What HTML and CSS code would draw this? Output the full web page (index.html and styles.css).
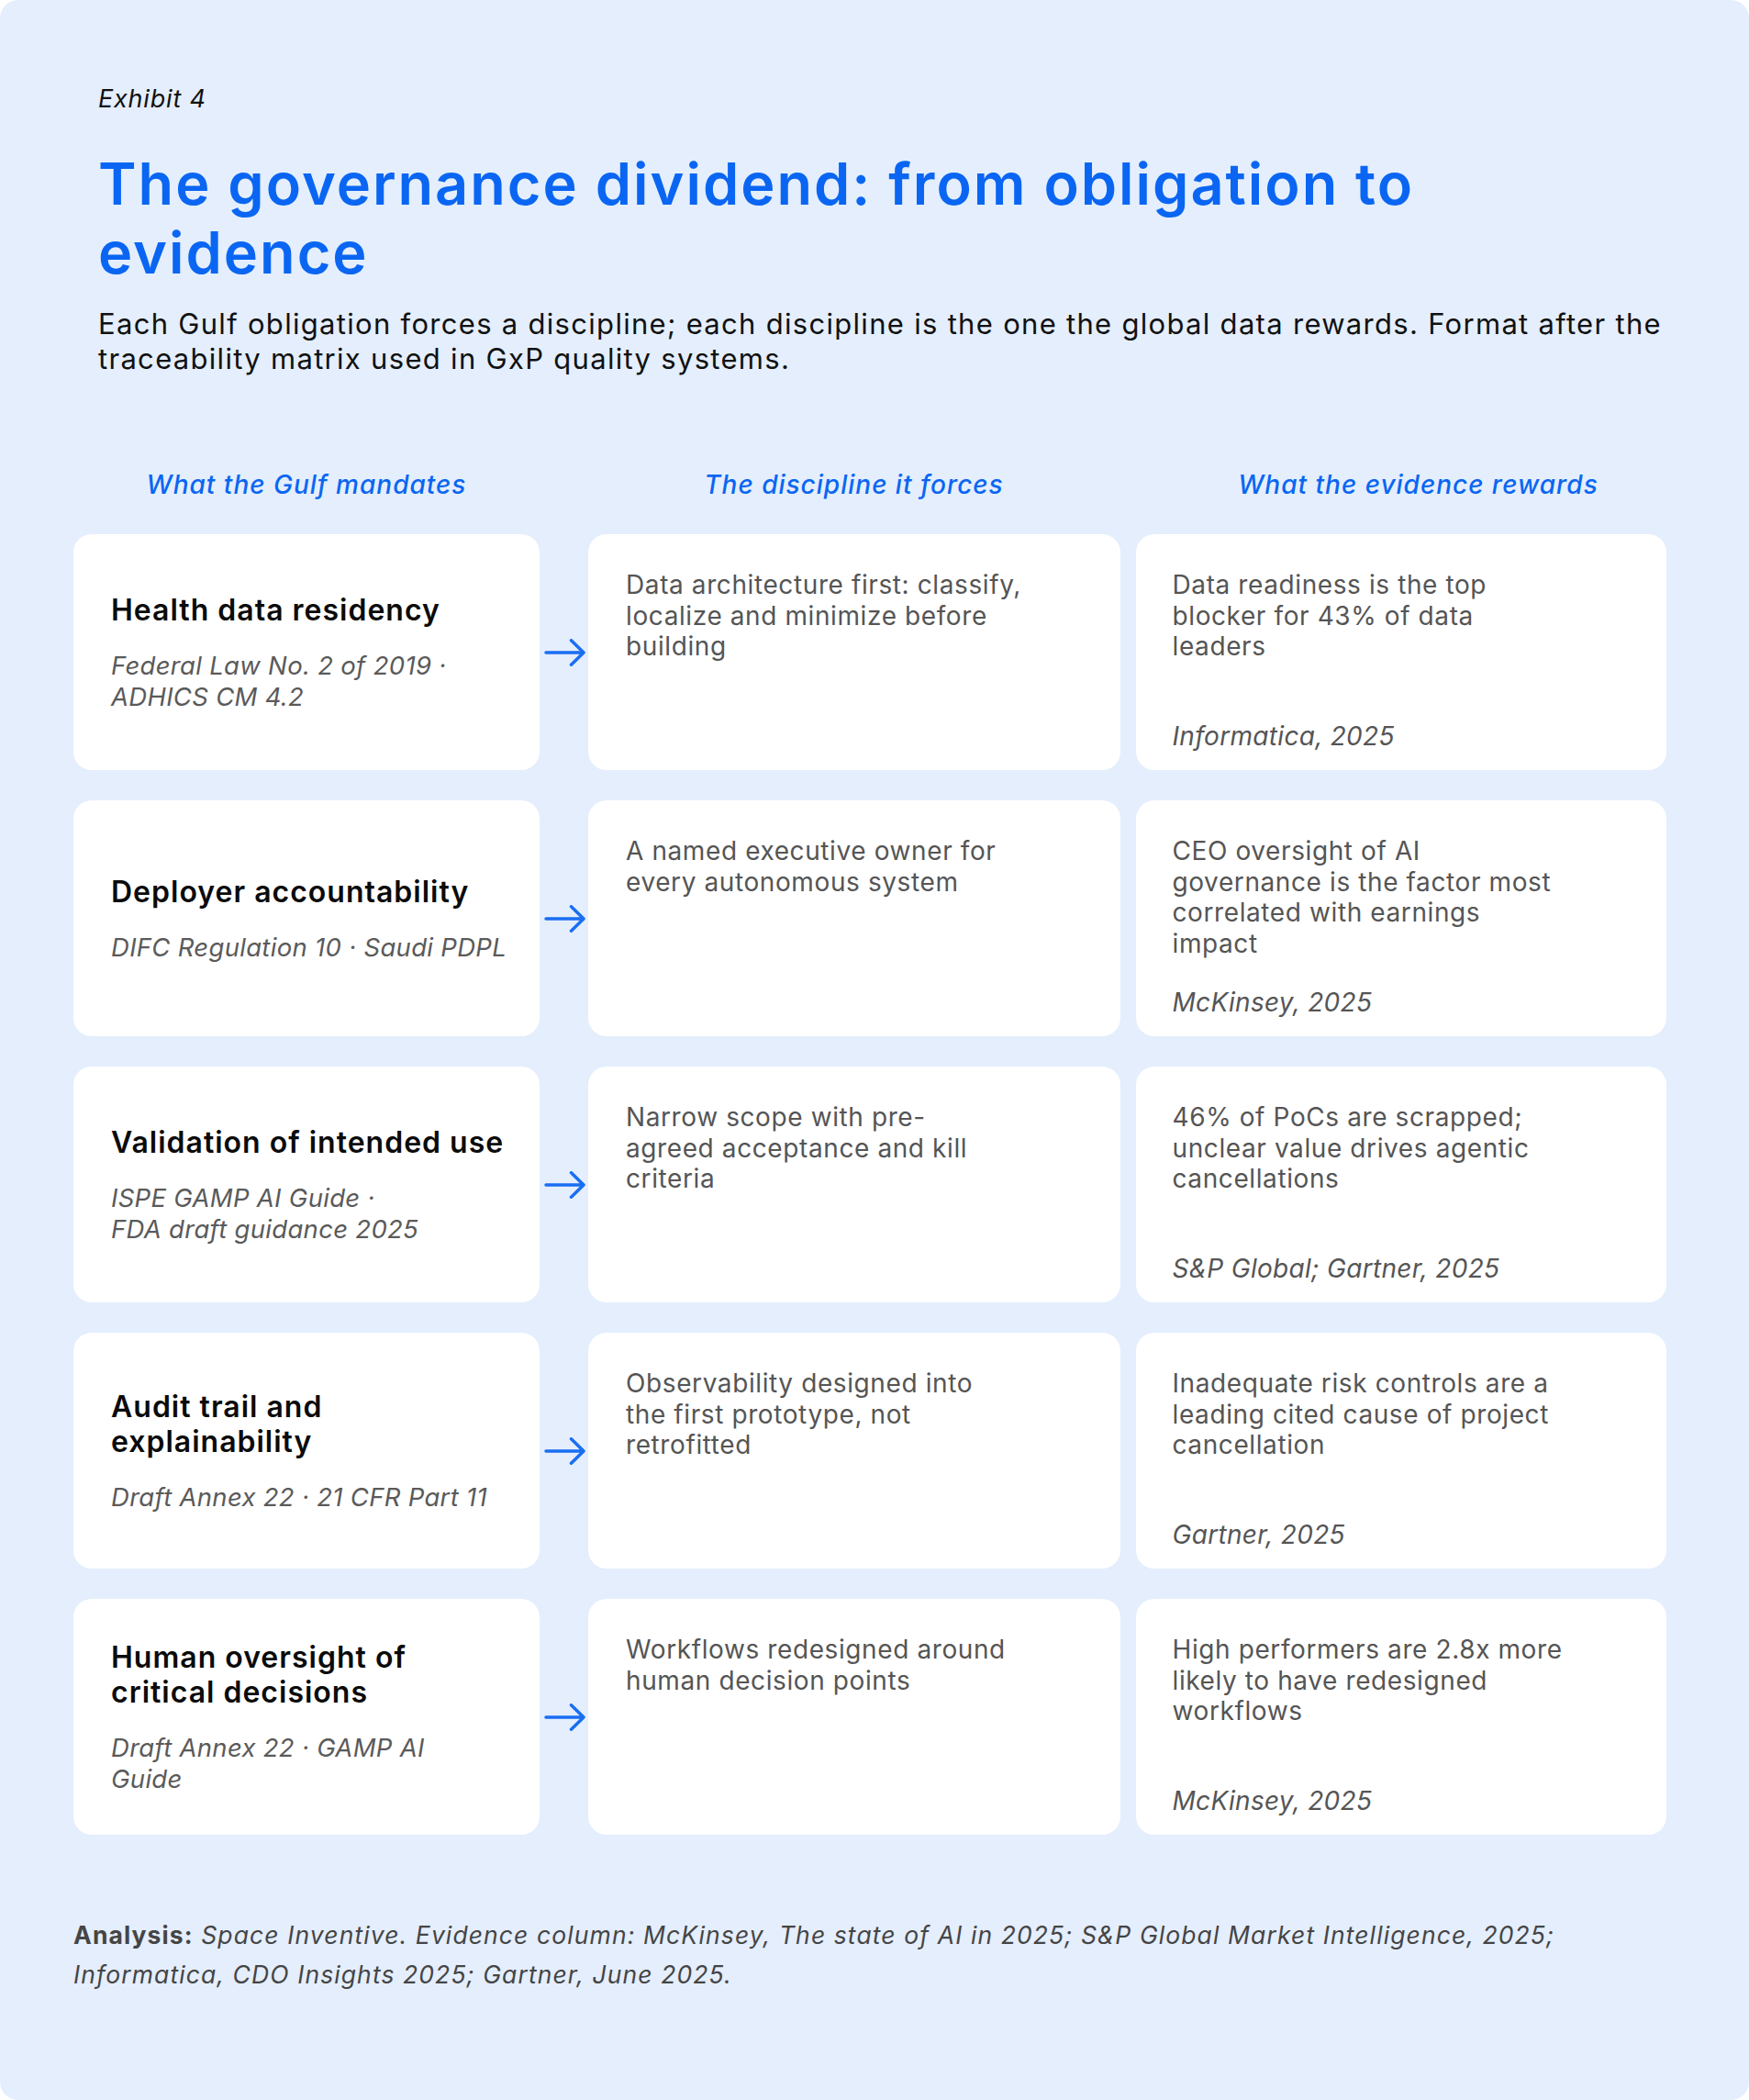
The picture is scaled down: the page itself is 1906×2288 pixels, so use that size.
FILE: index.html
```html
<!DOCTYPE html>
<html lang="en">
<head>
<meta charset="utf-8">
<title>Exhibit 4 – The governance dividend</title>
<link rel="stylesheet" href="styles.css">
</head>
<body>
<main class="exhibit">
  <header class="intro">
    <p class="eyebrow">Exhibit 4</p>
    <h1 class="title">The governance dividend: from obligation to evidence</h1>
    <p class="lede">Each Gulf obligation forces a discipline; each discipline is the one the global data rewards. Format after the<br>traceability matrix used in GxP quality systems.</p>
  </header>

  <section class="matrix">
    <div class="row row-heads">
      <div class="head head-mandate">What the Gulf mandates</div>
      <div class="link"></div>
      <div class="pair">
        <div class="head">The discipline it forces</div>
        <div class="head head-evidence">What the evidence rewards</div>
      </div>
    </div>

    <div class="rows">
      <div class="row">
        <div class="card mandate">
          <h2 class="mandate-title">Health data residency</h2>
          <p class="mandate-ref">Federal Law No. 2 of 2019 ·<br>ADHICS CM 4.2</p>
        </div>
        <div class="link"><svg class="arrow" viewBox="0 0 46 30" aria-hidden="true"><path d="M2 15H43M29.5 1.8L43 15L29.5 28.2"/></svg></div>
        <div class="pair">
          <div class="card discipline"><p class="body">Data architecture first: classify,<br>localize and minimize before<br>building</p></div>
          <div class="card evidence"><p class="body">Data readiness is the top<br>blocker for 43% of data<br>leaders</p><p class="source">Informatica, 2025</p></div>
        </div>
      </div>

      <div class="row">
        <div class="card mandate">
          <h2 class="mandate-title">Deployer accountability</h2>
          <p class="mandate-ref">DIFC Regulation 10 · Saudi PDPL</p>
        </div>
        <div class="link"><svg class="arrow" viewBox="0 0 46 30" aria-hidden="true"><path d="M2 15H43M29.5 1.8L43 15L29.5 28.2"/></svg></div>
        <div class="pair">
          <div class="card discipline"><p class="body">A named executive owner for<br>every autonomous system</p></div>
          <div class="card evidence"><p class="body">CEO oversight of AI<br>governance is the factor most<br>correlated with earnings<br>impact</p><p class="source">McKinsey, 2025</p></div>
        </div>
      </div>

      <div class="row">
        <div class="card mandate">
          <h2 class="mandate-title">Validation of intended use</h2>
          <p class="mandate-ref">ISPE GAMP AI Guide ·<br>FDA draft guidance 2025</p>
        </div>
        <div class="link"><svg class="arrow" viewBox="0 0 46 30" aria-hidden="true"><path d="M2 15H43M29.5 1.8L43 15L29.5 28.2"/></svg></div>
        <div class="pair">
          <div class="card discipline"><p class="body">Narrow scope with pre-<br>agreed acceptance and kill<br>criteria</p></div>
          <div class="card evidence"><p class="body">46% of PoCs are scrapped;<br>unclear value drives agentic<br>cancellations</p><p class="source">S&amp;P Global; Gartner, 2025</p></div>
        </div>
      </div>

      <div class="row">
        <div class="card mandate">
          <h2 class="mandate-title">Audit trail and<br>explainability</h2>
          <p class="mandate-ref">Draft Annex 22 · 21 CFR Part 11</p>
        </div>
        <div class="link"><svg class="arrow" viewBox="0 0 46 30" aria-hidden="true"><path d="M2 15H43M29.5 1.8L43 15L29.5 28.2"/></svg></div>
        <div class="pair">
          <div class="card discipline"><p class="body">Observability designed into<br>the first prototype, not<br>retrofitted</p></div>
          <div class="card evidence"><p class="body">Inadequate risk controls are a<br>leading cited cause of project<br>cancellation</p><p class="source">Gartner, 2025</p></div>
        </div>
      </div>

      <div class="row">
        <div class="card mandate">
          <h2 class="mandate-title">Human oversight of<br>critical decisions</h2>
          <p class="mandate-ref">Draft Annex 22 · GAMP AI<br>Guide</p>
        </div>
        <div class="link"><svg class="arrow" viewBox="0 0 46 30" aria-hidden="true"><path d="M2 15H43M29.5 1.8L43 15L29.5 28.2"/></svg></div>
        <div class="pair">
          <div class="card discipline"><p class="body">Workflows redesigned around<br>human decision points</p></div>
          <div class="card evidence"><p class="body">High performers are 2.8x more<br>likely to have redesigned<br>workflows</p><p class="source">McKinsey, 2025</p></div>
        </div>
      </div>
    </div>
  </section>

  <p class="footnote"><strong>Analysis:</strong> <em>Space Inventive. Evidence column: McKinsey, The state of AI in 2025; S&amp;P Global Market Intelligence, 2025;<br>Informatica, CDO Insights 2025; Gartner, June 2025.</em></p>
</main>
</body>
</html>
```

FILE: styles.css
```css
* { box-sizing: border-box; }

html, body {
  margin: 0;
  padding: 0;
  background: #ffffff;
}

body {
  font-family: Inter, "Open Sans", "Noto Sans", sans-serif;
  color: #111111;
}

.exhibit {
  width: 1906px;
  min-height: 2288px;
  background: #e4eefd;
  border-radius: 20px;
  padding: 92px 90px 0 80px;
}

/* ---------- intro ---------- */
.intro {
  padding-left: 27px;
  margin-right: -60px;
}

.eyebrow {
  margin: 0;
  font-size: 27px;
  line-height: 32px;
  font-style: italic;
  letter-spacing: 0.8px;
  color: #111111;
}

.title {
  max-width: 1500px;
  margin: 39px 0 0;
  font-size: 63px;
  line-height: 75px;
  font-weight: 600;
  letter-spacing: 2px;
  color: #0a66f2;
}

.lede {
  margin: 21px 0 0;
  font-size: 31px;
  line-height: 38px;
  letter-spacing: 1.3px;
  color: #111111;
}

/* ---------- matrix ---------- */
.matrix {
  margin-top: 102px;
  width: 1736px;
}

.row {
  display: flex;
  align-items: stretch;
}

.row-heads {
  margin-bottom: 38px;
}

.head {
  flex: 1 1 0;
  min-width: 0;
  text-align: center;
  font-size: 28px;
  line-height: 32px;
  font-style: italic;
  font-weight: 500;
  letter-spacing: 1px;
  color: #0a66f2;
}

.head-mandate {
  flex: 0 0 508px;
}

.head-evidence {
  text-indent: 38px;
}

.rows {
  display: flex;
  flex-direction: column;
  gap: 33px;
}

.rows .row {
  min-height: 257px;
}

.link {
  flex: 0 0 53px;
  display: flex;
  align-items: center;
  justify-content: flex-end;
  padding-right: 2px;
}

.arrow {
  width: 46px;
  height: 30px;
  fill: none;
  stroke: #1a6ef2;
  stroke-width: 3.5;
  stroke-linecap: round;
  stroke-linejoin: round;
}

.pair {
  flex: 1;
  display: flex;
  gap: 17px;
}

.card {
  background: #ffffff;
  border-radius: 20px;
}

.mandate {
  flex: 0 0 508px;
  display: flex;
  flex-direction: column;
  justify-content: center;
  padding: 0 30px 0 41px;
}

.mandate-title {
  margin: 0;
  font-size: 32px;
  line-height: 38px;
  font-weight: 600;
  letter-spacing: 1px;
  color: #0b0b0b;
}

.mandate-ref {
  margin: 24px 0 0;
  font-size: 27.5px;
  line-height: 34px;
  font-style: italic;
  letter-spacing: 0.3px;
  color: #5a5a5a;
}

.discipline,
.evidence {
  flex: 1 1 0;
  min-width: 0;
}

.discipline {
  padding: 39px 30px 39px 41px;
}

.evidence {
  display: flex;
  flex-direction: column;
  padding: 39px 30px 20px 40px;
}

.body {
  margin: 0;
  font-size: 28px;
  line-height: 33.5px;
  letter-spacing: 0.6px;
  color: #555555;
}

.source {
  margin: auto 0 0;
  padding-top: 24px;
  font-size: 28px;
  line-height: 33.5px;
  font-style: italic;
  letter-spacing: 0.3px;
  color: #555555;
}

/* ---------- footnote ---------- */
.footnote {
  margin: 88px 0 0;
  font-size: 26.5px;
  line-height: 43px;
  letter-spacing: 1.1px;
  color: #454545;
}

.footnote strong {
  font-weight: 700;
}

.footnote em {
  font-style: italic;
}
```
